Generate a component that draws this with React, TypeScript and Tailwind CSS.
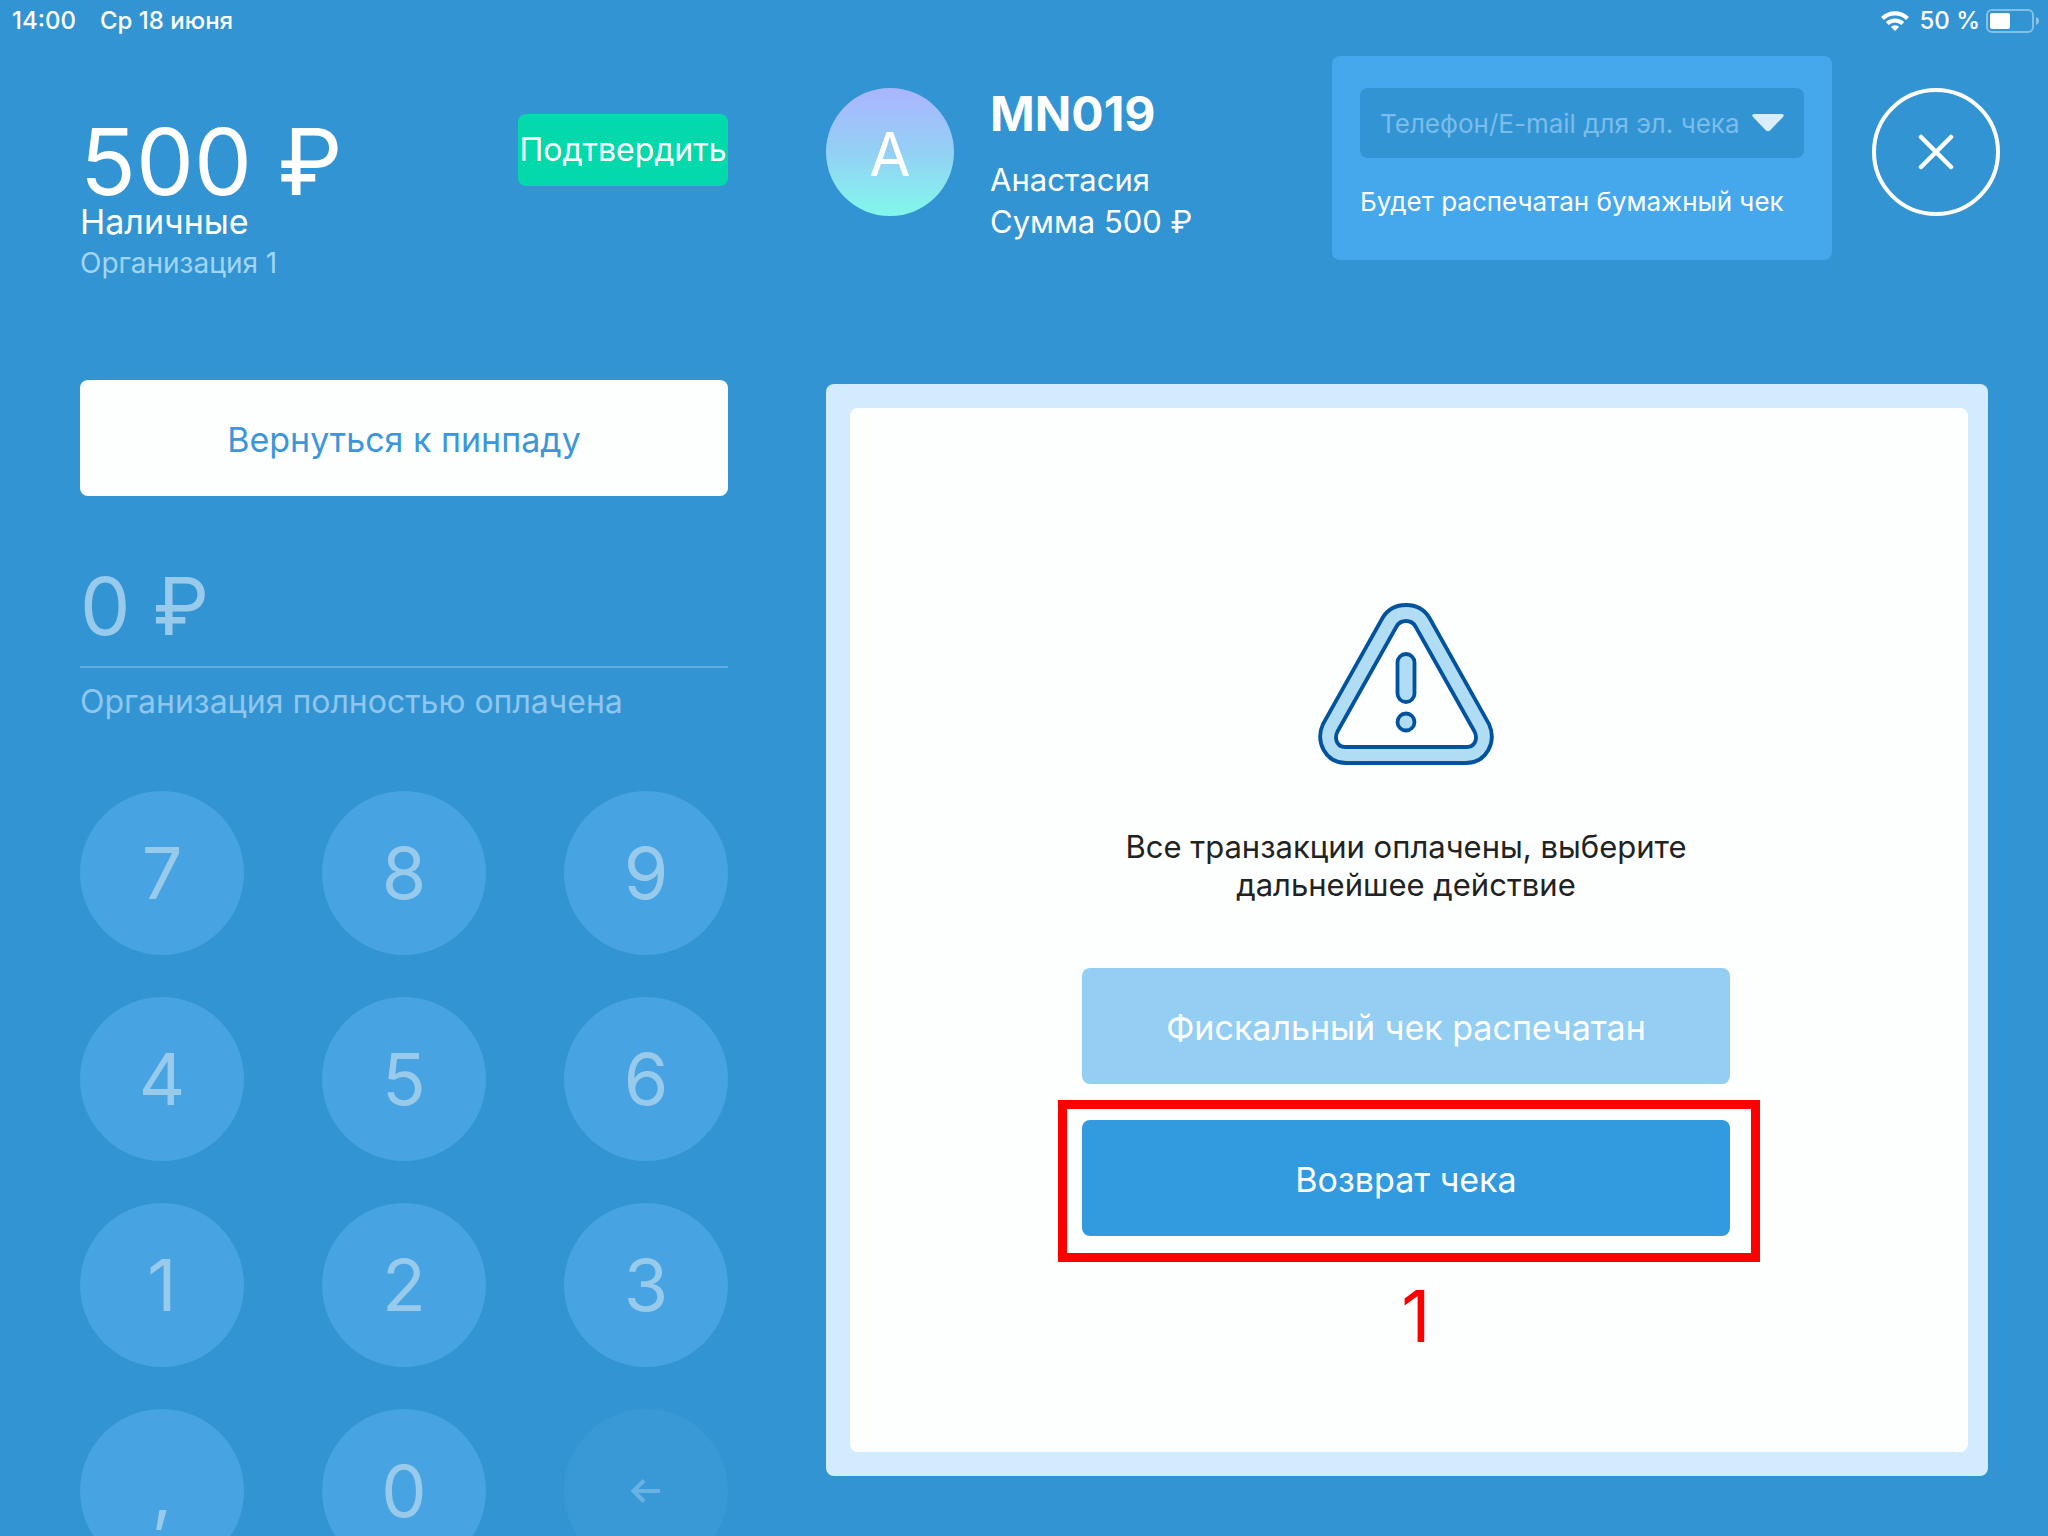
import React from "react";

const KEYS = ["7", "8", "9", "4", "5", "6", "1", "2", "3", ",", "0"];

function WifiIcon() {
  return (
    <svg className="h-5 w-7" viewBox="0 0 28 20" fill="none" aria-hidden="true">
      <path d="M1.500 7.500a18 18 0 0 1 25 0" stroke="#fff" strokeWidth="4.200" />
      <path d="M6.200 12.500a11.300 11.300 0 0 1 15.600 0" stroke="#fff" strokeWidth="4" />
      <path d="M14 20l-4.200-4.200a6.200 6.200 0 0 1 8.400 0z" fill="#fff" />
    </svg>
  );
}

function BatteryIcon() {
  return (
    <svg className="h-6 w-[54px]" viewBox="0 0 54 24" fill="none" aria-hidden="true">
      <rect x="1" y="1" width="46" height="22" rx="5" stroke="#fff" strokeOpacity=".4" strokeWidth="2" />
      <rect x="4" y="4" width="20" height="16" rx="2" fill="#fff" />
      <path d="M50 8c2 .8 3 2.200 3 4s-1 3.200-3 4z" fill="#fff" fillOpacity=".45" />
    </svg>
  );
}

function StatusBar() {
  return (
    <header className="flex h-[42px] shrink-0 items-center justify-between pr-2 pl-3 text-2xl font-medium">
      <div className="flex gap-6">
        <span>14:00</span>
        <span>Ср 18 июня</span>
      </div>
      <div className="flex items-center">
        <WifiIcon />
        <span className="ml-2.5">50 %</span>
        <span className="ml-1.5 flex">
          <BatteryIcon />
        </span>
      </div>
    </header>
  );
}

function WarningIcon() {
  return (
    <svg className="h-[162px] w-44" viewBox="0 0 176 162" fill="none" stroke="#02539F" strokeWidth="3.800" aria-hidden="true">
      <path
        fillRule="evenodd"
        fill="#B0DCF4"
        d="M88 2C77 2 69.500 6.500 64.500 15L5 121C-3 139 7.500 160 28 160H148C168.500 160 179 139 171 121L111.500 15C106.500 6.500 99 2 88 2ZM88 18C83.500 18 80.500 20 78.500 23.500L19.500 128.500C16 135.500 19 144 27 144H149C157 144 160 135.500 156.500 128.500L97.500 23.500C95.500 20 92.500 18 88 18Z"
      />
      <rect x="79.500" y="51" width="17" height="48" rx="8.500" fill="#B0DCF4" />
      <circle cx="88" cy="119" r="8.500" fill="#B0DCF4" />
    </svg>
  );
}

function PaymentColumn() {
  return (
    <section className="flex w-[648px] shrink-0 flex-col">
      <div className="mt-[66px] flex justify-between">
        <div>
          <p className="text-[92px] leading-[80px]">500 ₽</p>
          <p className="text-[34px] leading-10">Наличные</p>
          <p className="text-[28px] leading-[42px] text-[#A0D5F8]">Организация 1</p>
        </div>
        <button type="button" className="-mt-2 flex h-18 w-[210px] items-center justify-center rounded-lg bg-[#03D9AB] text-[32px] whitespace-nowrap">
          Подтвердить
        </button>
      </div>
      <button type="button" className="mt-24 h-[116px] shrink-0 rounded-lg bg-[#FDFFFE] pt-0.5 text-[34px] text-[#3C96D9]">
        Вернуться к пинпаду
      </button>
      <div className="mt-[70px] border-b-2 border-[#62ADE0] pb-5 text-[80px] leading-[80px] text-[#98CAEC]">0 ₽</div>
      <p className="mt-3.5 text-[32px] leading-10 text-[#8FC6EE]">Организация полностью оплачена</p>
      <div className="mt-[69px] grid grid-cols-[repeat(3,164px)] justify-between gap-y-[42px]">
        {KEYS.map((k) => (
          <button key={k} type="button" className="size-[164px] rounded-full bg-[#47A3E1] text-7xl text-[#98CAEC]">
            {k}
          </button>
        ))}
        <button type="button" aria-label="Стереть" className="flex size-[164px] items-center justify-center rounded-full bg-[#3998D6]">
          <svg className="h-6 w-8" viewBox="0 0 32 24" fill="none" stroke="#69B2E4" strokeWidth="4" aria-hidden="true">
            <path d="M30 12H4M14 1.500L3.500 12L14 22.500" />
          </svg>
        </button>
      </div>
    </section>
  );
}

function OrderHeader() {
  return (
    <div className="flex h-[204px] shrink-0 items-start">
      <div className="mt-8 flex size-32 items-center justify-center rounded-full bg-linear-to-b from-[#A9B5FF] via-[#93D0F5] to-[#80F8EA] pt-1 text-6xl">
        А
      </div>
      <div className="mt-[30px] ml-9">
        <h1 className="text-5xl leading-14 font-bold">MN019</h1>
        <p className="mt-[17px] text-[31px] leading-[42px]">Анастасия</p>
        <p className="text-[31px] leading-[42px]">Сумма 500 ₽</p>
      </div>
      <div className="ml-auto h-full w-[500px] rounded-lg bg-[#45A7EC] px-7 pt-8">
        <div className="flex h-[70px] items-center rounded-lg bg-[#3394D3] px-5">
          <input
            type="text"
            aria-label="Телефон/E-mail для эл. чека"
            placeholder="Телефон/E-mail для эл. чека"
            className="min-w-0 flex-1 text-[26px] outline-none placeholder:text-[#7ABDEB]"
          />
          <button type="button" aria-label="Открыть список" className="flex">
            <svg className="h-[18px] w-8" viewBox="0 0 32 18" aria-hidden="true">
              <path d="M2 0H30Q33 .5 31 3L18 16.500Q16 18 14 16.500L1 3Q-1 .5 2 0Z" fill="#D9EDFB" />
            </svg>
          </button>
        </div>
        <p className="mt-7 text-[26px] leading-8 whitespace-nowrap">Будет распечатан бумажный чек</p>
      </div>
      <button type="button" aria-label="Закрыть" className="mt-8 ml-10 flex size-32 items-center justify-center rounded-full border-4 border-white">
        <svg className="size-9" viewBox="0 0 36 36" stroke="#fff" strokeWidth="4.500" strokeLinecap="round" aria-hidden="true">
          <path d="M3 3L33 33M33 3L3 33" />
        </svg>
      </button>
    </div>
  );
}

function ActionPanel() {
  return (
    <div className="mt-[124px] mr-3 mb-15 flex min-h-0 flex-1 flex-col rounded-lg bg-[#D3ECFD] py-6 pr-5 pl-6">
      <div className="flex flex-1 flex-col items-center rounded-lg bg-[#FDFFFE] pt-[195px] pr-1.5">
        <WarningIcon />
        <p className="mt-[63px] text-center text-[31px] leading-[38px] text-[#222]">
          Все транзакции оплачены, выберите
          <br />
          дальнейшее действие
        </p>
        <button type="button" className="mt-16 h-[116px] w-[648px] shrink-0 rounded-lg bg-[#94CEF3] pt-0.5 text-[34px]">
          Фискальный чек распечатан
        </button>
        <div className="relative mt-9">
          <button type="button" className="block h-[116px] w-[648px] rounded-lg bg-[#329ADF] pt-0.5 text-[34px]">
            Возврат чека
          </button>
          <div className="pointer-events-none absolute -top-5 -right-7.5 -bottom-6.5 -left-6 border-[9px] border-[#FF0000]" />
        </div>
        <p className="mt-12 ml-5 text-7xl leading-16 text-[#FA0000]">1</p>
      </div>
    </div>
  );
}

export default function App() {
  return (
    <div className="flex h-screen flex-col overflow-hidden bg-[#3394D3] font-['Inter','Noto_Sans',sans-serif] text-white">
      <StatusBar />
      <main className="flex min-h-0 flex-1 gap-[98px] pt-3.5 pr-12 pl-20">
        <PaymentColumn />
        <section className="flex min-w-0 flex-1 flex-col">
          <OrderHeader />
          <ActionPanel />
        </section>
      </main>
    </div>
  );
}
